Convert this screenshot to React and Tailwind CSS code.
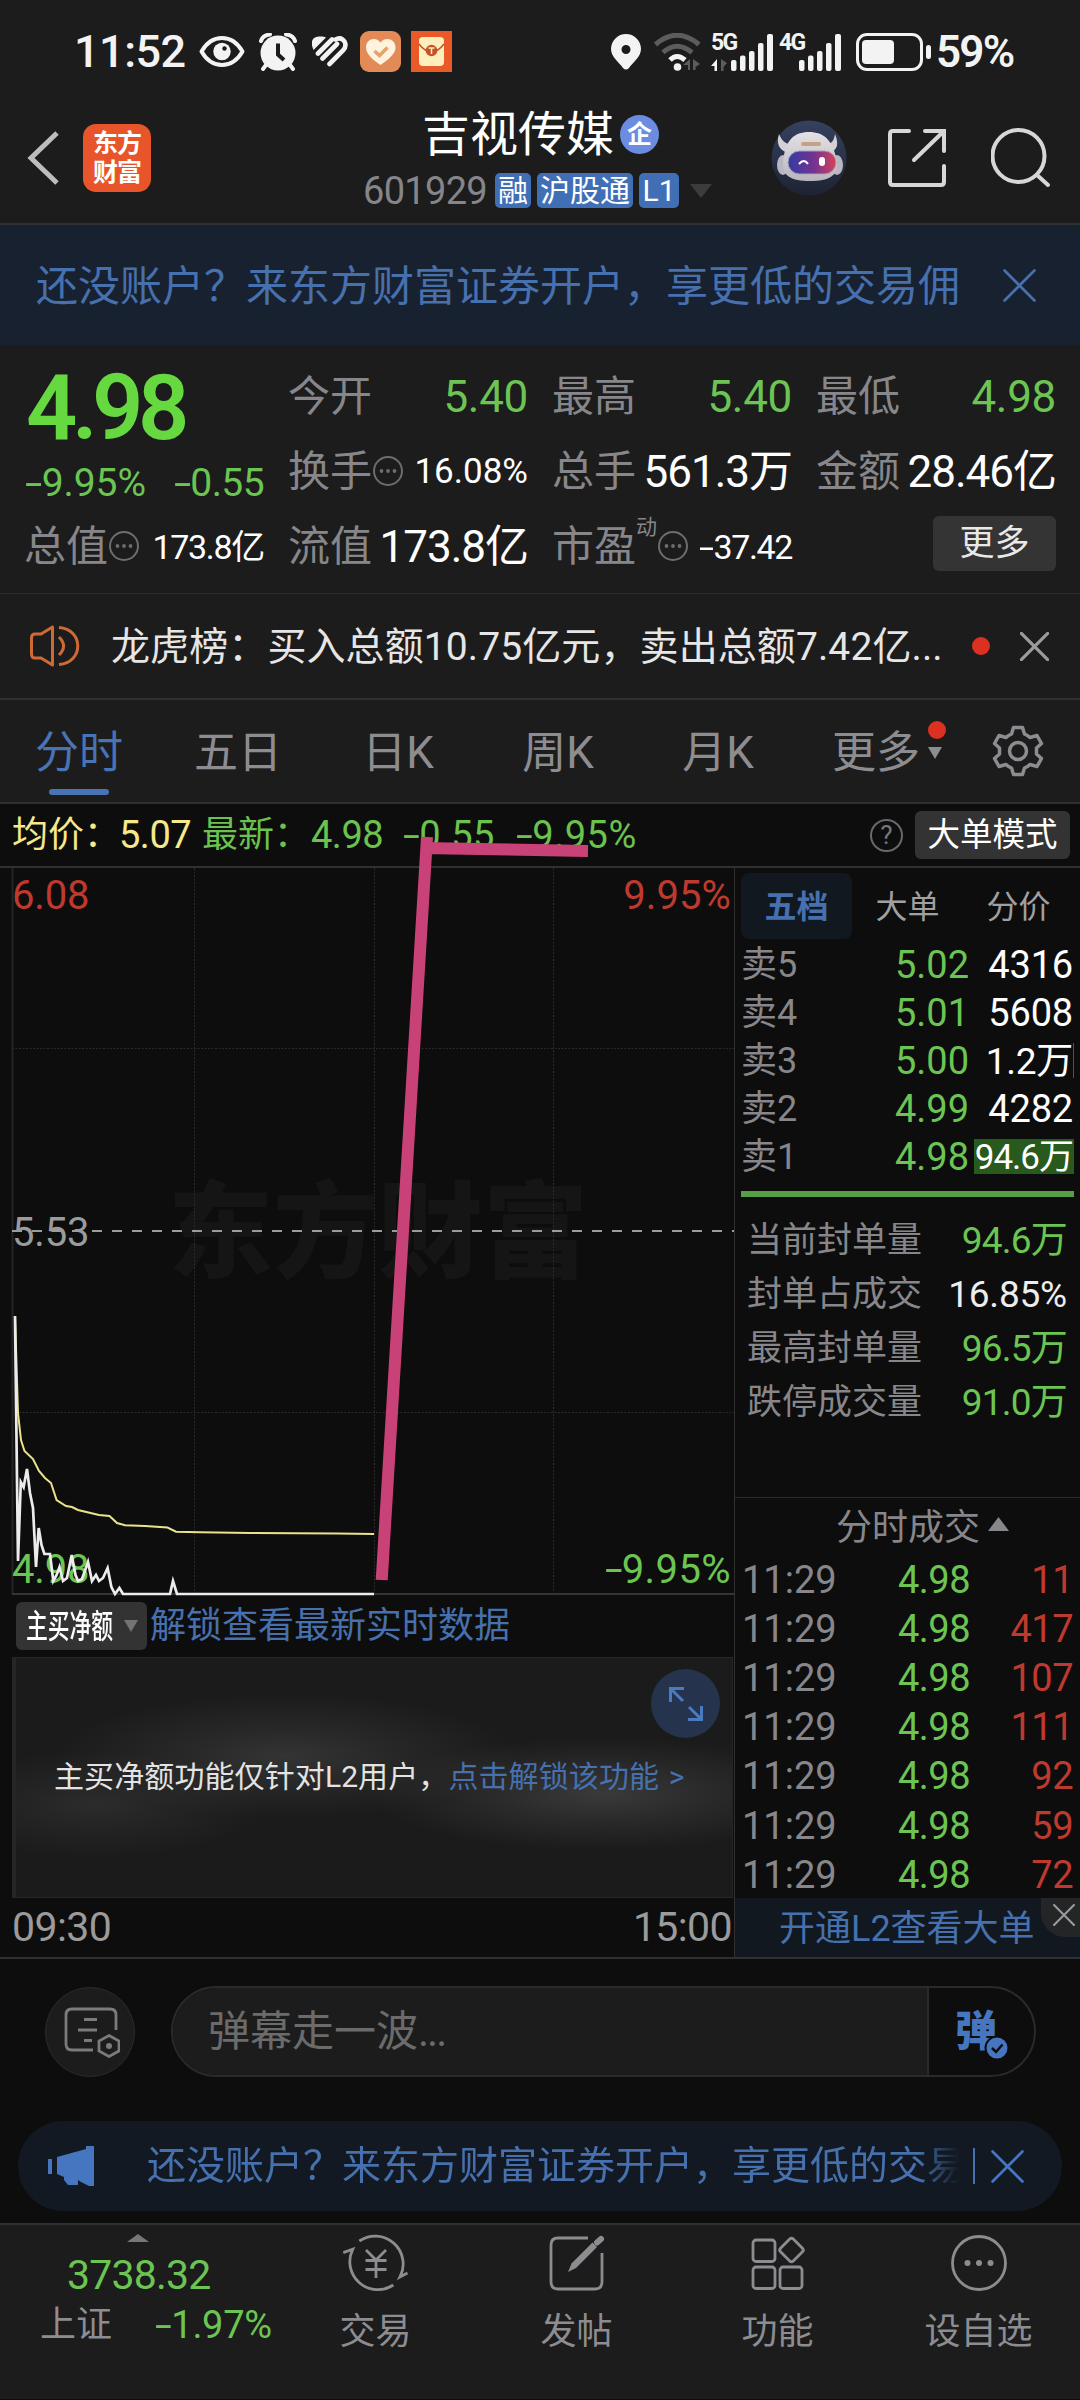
import clsx from "clsx";

const TABS = ["五日", "日K", "周K", "月K"];

const ASKS = [
  { label: "卖5", price: "5.02", volume: "4316" },
  { label: "卖4", price: "5.01", volume: "5608" },
  { label: "卖3", price: "5.00", volume: "1.2万", tick: true },
  { label: "卖2", price: "4.99", volume: "4282" },
  { label: "卖1", price: "4.98", volume: "94.6万", filled: true },
];

const LIMIT_STATS = [
  { label: "当前封单量", value: "94.6万", down: true },
  { label: "封单占成交", value: "16.85%" },
  { label: "最高封单量", value: "96.5万", down: true },
  { label: "跌停成交量", value: "91.0万", down: true },
];

const TRADES = [
  { time: "11:29", price: "4.98", volume: "11" },
  { time: "11:29", price: "4.98", volume: "417" },
  { time: "11:29", price: "4.98", volume: "107" },
  { time: "11:29", price: "4.98", volume: "111" },
  { time: "11:29", price: "4.98", volume: "92" },
  { time: "11:29", price: "4.98", volume: "59" },
  { time: "11:29", price: "4.98", volume: "72" },
];

const PRICE_LINE =
  "15,450 18,695 20.8,616 23.6,621 27,603 30,627 33,642 36,701 38.7,662 41.5,679 44.4,688 50,688 53.3,715 56.6,709 59.5,701 63,715 67,712 71.7,689 75.5,709 78,715 82,713 88,696 92,715 96,709 99,715 103,712 107.6,702 111.4,721 115,728 119.4,722 123,728 170,728 173,715 177,728 374,728";
const AVG_LINE =
  "15,450 18,547 21,574 24.5,585 33,593 39,605 45,612 51,617 56.6,634 66,640 72,641 78,644 99,649 109.5,650 117,657 125,659.3 145,660 167.5,661.5 176,665.7 200,666.3 250,667 337,667.5 374,668";

function CloseIcon({ className, width = 3 }) {
  return (
    <svg viewBox="0 0 32 32" className={className} fill="none" stroke="currentColor" strokeWidth={width}>
      <path d="M1.5 1.5 30.5 30.5M30.5 1.5 1.5 30.5" strokeLinecap="round" />
    </svg>
  );
}

function InfoDots() {
  return (
    <svg viewBox="0 0 32 32" className="h-8 w-8 shrink-0 text-[#6d6d70]">
      <circle cx="16" cy="16" r="14" fill="none" stroke="currentColor" strokeWidth="2" />
      <circle cx="9.5" cy="16" r="1.9" fill="currentColor" />
      <circle cx="16" cy="16" r="1.9" fill="currentColor" />
      <circle cx="22.5" cy="16" r="1.9" fill="currentColor" />
    </svg>
  );
}

// Negative numbers get a wider minus than the font's hyphen
function Num({ children }) {
  if (!children.startsWith("-")) return children;
  return (
    <>
      <span className="inline-block w-[0.43em] origin-left scale-x-[1.6]">-</span>
      {children.slice(1)}
    </>
  );
}

function SignalBars({ label, arrows }) {
  return (
    <div className="relative h-[38px] w-[62px]">
      <span className="absolute -top-[1px] left-0 text-[23px] leading-[22px] font-bold tracking-[-1.8px]">{label}</span>
      <svg viewBox="0 0 62 38" className="h-full w-full" fill="currentColor">
        {arrows && <path d="M0 33 6 26V38H3.5V33Z" />}
        {arrows && <path d="M16 30 10 26V38H12.500V34Z" fill="#5c5c5c" />}
        <rect x="20" y="27" width="5.500" height="11" rx="2" />
        <rect x="29" y="22.500" width="5.500" height="15.500" rx="2" />
        <rect x="38" y="18" width="5.500" height="20" rx="2" />
        <rect x="47" y="10" width="5.500" height="28" rx="2" />
        <rect x="56" y="1" width="6" height="37" rx="2" />
      </svg>
    </div>
  );
}

function StatusBar() {
  return (
    <div className="flex h-[103px] items-center pl-[74px] text-[#f3f3f3]">
      <span className="w-[125px] text-[45px] font-medium tracking-[-0.5px]">11:52</span>
      <svg viewBox="0 0 46 31" className="h-[31px] w-[46px]">
        <path d="M2.500 15.500C13-2.500 33-2.500 43.500 15.500 33 33.500 13 33.500 2.500 15.500Z" fill="none" stroke="currentColor" strokeWidth="4" strokeLinejoin="round" />
        <circle cx="23" cy="15.500" r="8.700" fill="currentColor" />
        <circle cx="25.500" cy="12.500" r="2.200" fill="#1c1c1c" />
      </svg>
      <svg viewBox="0 0 38 38" className="ml-[14px] h-[38px] w-[38px]" fill="none" stroke="currentColor">
        <circle cx="19" cy="20" r="17.500" fill="currentColor" stroke="none" />
        <path d="M2 8Q4 2 11 1.500M27 1.500Q34 2 36 8" strokeWidth="4" strokeLinecap="round" />
        <path d="M7 32 4 36M31 32 34 36" strokeWidth="4" strokeLinecap="round" />
        <path d="M19 10.500V21.500L25 27" stroke="#1c1c1c" strokeWidth="4" />
      </svg>
      <svg viewBox="0 0 36 31" className="ml-[15px] h-[31px] w-9" fill="currentColor">
        <path d="M14 1.500 1.500 14C-1.500 7-1 1 7 0.500 10 0.300 12 0.500 14 1.500Z" />
        <path d="M6 17.500 20 3.500M10.500 22.500 25 8M17.500 28 31 14.500Q35 10 32.500 5.500 29 0.500 23.500 3.500" fill="none" stroke="currentColor" strokeWidth="4.600" strokeLinecap="round" />
      </svg>
      <svg viewBox="0 0 41 41" className="ml-3 h-[41px] w-[41px]">
        <rect width="41" height="41" rx="9" fill="#e38b57" />
        <path d="M20.500 34C13 29 6 23 6 16.500 6 8 15.500 5 20.500 11.500 25.500 5 35.500 8 35.500 16.500 35.500 23 28 29 20.500 34Z" fill="#fff3dd" />
        <path d="M14.500 20 19.500 24.500 27.500 16.500" fill="none" stroke="#e3a46d" strokeWidth="3.500" />
      </svg>
      <svg viewBox="0 0 41 41" className="ml-[10px] h-[41px] w-[41px]">
        <rect width="41" height="41" fill="#ea5a28" />
        <rect x="8" y="6" width="25" height="29" rx="4" fill="#fdeebb" />
        <path d="M8 13Q20.500 29 33 13" fill="none" stroke="#b75530" strokeWidth="1.500" />
        <circle cx="20.500" cy="19.500" r="5.800" fill="#c4532a" />
        <path d="M17.500 17H23.500M20.500 17V23" stroke="#fdeebb" strokeWidth="1.500" />
      </svg>
      <svg viewBox="0 0 30 36" className="ml-[159px] h-9 w-[30px]">
        <path fillRule="evenodd" d="M15 0A15 15 0 0 0 0 15C0 23 8 28 12 34Q15 37 18 34C22 28 30 23 30 15A15 15 0 0 0 15 0ZM15 11A4.500 4.500 0 1 1 15 20 4.500 4.500 0 0 1 15 11Z" fill="currentColor" />
      </svg>
      <svg viewBox="0 0 48 38" className="ml-[13px] h-[38px] w-12" fill="none" strokeWidth="5">
        <path d="M1.500 11.500Q23-7 45 11.500" stroke="#5c5c5c" />
        <path d="M9 19.500Q23 7 38 19.500" stroke="#5c5c5c" />
        <path d="M16 27Q23 20 31 27" stroke="currentColor" />
        <circle cx="23.500" cy="34" r="3.800" fill="currentColor" />
        <path d="M29 32 36 26V37H34V32ZM46 31 39 26V37H41.500V34Z" fill="#5c5c5c" />
      </svg>
      <div className="ml-[9px]"><SignalBars label="5G" arrows /></div>
      <div className="ml-[6px]"><SignalBars label="4G" /></div>
      <svg viewBox="0 0 76 38" className="ml-[15px] h-[38px] w-[76px]">
        <rect x="1.500" y="1.500" width="64" height="35" rx="9.500" fill="none" stroke="currentColor" strokeWidth="3" />
        <rect x="6" y="7" width="32" height="24" rx="4" fill="currentColor" />
        <rect x="70" y="12" width="5" height="14" rx="2.500" fill="currentColor" />
      </svg>
      <span className="ml-[4px] text-[44px] font-semibold tracking-[-1.8px]">59%</span>
    </div>
  );
}

function Tag({ children, className }) {
  return (
    <span className={clsx("flex h-[35px] items-center justify-center rounded-[5px] bg-[#416fb6] text-[30px] leading-none text-white", className)}>
      {children}
    </span>
  );
}

function Header() {
  return (
    <header className="flex h-[122px] items-center border-b-2 border-[#303030] pb-[11px]">
      <svg viewBox="0 0 32 54" className="ml-[27px] h-[54px] w-8 text-[#bdbdbd]" fill="none" stroke="currentColor" strokeWidth="5">
        <path d="M30 2 4 27 30 52" />
      </svg>
      <div className="ml-6 flex h-[68px] w-[68px] flex-col items-center justify-center rounded-[13px] bg-[#e8552a] text-[25px] leading-[29px] font-bold tracking-[-1px] text-white">
        <span>东方</span>
        <span>财富</span>
      </div>
      <div className="ml-[212px] flex w-[350px] flex-col pt-[3px]">
        <div className="flex h-[58px] items-center pl-[59px]">
          <h1 className="text-[48px] leading-none text-white">吉视传媒</h1>
          <span className="ml-[6px] flex h-[39px] w-[39px] items-center justify-center rounded-full bg-[#6b8ce0] text-[25px] leading-none font-bold text-white">企</span>
        </div>
        <div className="mt-[5px] flex h-[44px] items-center gap-[6px]">
          <span className="mr-[2px] w-[124px] text-[38px] leading-none tracking-[-0.7px] text-[#85858a]">601929</span>
          <Tag className="w-9">融</Tag>
          <Tag className="w-24">沪股通</Tag>
          <Tag className="w-10">L1</Tag>
          <svg viewBox="0 0 22 14" className="ml-[5px] h-[14px] w-[22px]"><path d="M0 0H22L11 14Z" fill="#3c3c3c" /></svg>
        </div>
      </div>
      <svg viewBox="0 0 76 76" className="ml-[58px] h-[76px] w-[76px]">
        <defs>
          <linearGradient id="halo" x1="0" y1="0" x2="0" y2="1">
            <stop offset="0" stopColor="#35415f" />
            <stop offset="1" stopColor="#1d2333" />
          </linearGradient>
          <linearGradient id="shell" x1="0" y1="0" x2="0" y2="1">
            <stop offset="0" stopColor="#e4e1e4" />
            <stop offset="1" stopColor="#b9b5c0" />
          </linearGradient>
          <linearGradient id="visor" x1="0" y1="0" x2="1" y2="0">
            <stop offset="0" stopColor="#343ba5" />
            <stop offset="0.55" stopColor="#753390" />
            <stop offset="1" stopColor="#d6425b" />
          </linearGradient>
        </defs>
        <circle cx="38" cy="38" r="37.500" fill="url(#halo)" />
        <path d="M8 14C5 24 8 30 17 33L22 24C15 25 11 21 8 14ZM64 14C68 24 67 30 58 33L54 24C60 25 63 21 64 14Z" fill="#d3d0d6" />
        <ellipse cx="12" cy="45" rx="6" ry="10" fill="#b9b7c1" />
        <ellipse cx="66" cy="45" rx="6" ry="10" fill="#b9b7c1" />
        <path d="M12 42C14 20 23 12 38 12S62 20 66 42C67 56 58 61 39 61S11 56 12 42Z" fill="url(#shell)" />
        <rect x="17" y="31" width="48" height="23" rx="11.500" fill="url(#visor)" stroke="#a7a3b2" strokeWidth="1" />
        <rect x="30" y="22" width="20" height="4" rx="2" fill="#c6a184" />
        <path d="M28 44Q33 38 37 44" fill="none" stroke="#fff" strokeWidth="2" />
        <rect x="48" y="37" width="6" height="9" rx="3" fill="#fff" />
      </svg>
      <svg viewBox="0 0 60 60" className="ml-[40px] h-[60px] w-[60px] text-[#d7d7d7]" fill="none" stroke="currentColor" strokeWidth="4" strokeLinecap="round">
        <path d="M22 3H6Q3 3 3 6V54Q3 57 6 57H54Q57 57 57 54V38" />
        <path d="M38 3H57V23M56 4 27 32" />
      </svg>
      <svg viewBox="0 0 60 60" className="ml-[44px] h-[60px] w-[60px] text-[#d7d7d7]" fill="none" stroke="currentColor" strokeWidth="4" strokeLinecap="round">
        <circle cx="27.500" cy="28" r="26" />
        <path d="M46 47 57 57" />
      </svg>
    </header>
  );
}

function QuoteCell({ label, value, down, info, size = "text-[44px] tracking-[-1px]", sup }) {
  return (
    <div className="-ml-[2px] flex h-[75px] items-center justify-between">
      <div className="flex items-center text-[#87878b]">
        <span className="pt-[2px] text-[42px] leading-none">{label}</span>
        {sup && <span className="mb-9 text-[21px] leading-none">{sup}</span>}
        {info && <InfoDots />}
      </div>
      <span className={clsx("pt-[2px] leading-none", size, down ? "text-[#6cc553]" : "text-white")}>
        <Num>{value}</Num>
      </span>
    </div>
  );
}

function Quote() {
  return (
    <section className="grid h-[249px] grid-cols-[238px_238px_238px_238px] grid-rows-[75px_75px_75px] gap-x-[26px] border-b border-[#2a2a2a] pt-[13px] pl-[26px]">
      <div className="row-span-2 flex flex-col text-[#66d840]">
        <span className="mt-[8px] h-[86px] text-[90px] leading-[86px] font-semibold tracking-[-5.5px]">4.98</span>
        <div className="mt-[14px] -ml-[1px] flex items-center justify-between text-[39px] leading-[34px] tracking-[-0.1px] text-[#6cc553]">
          <span><Num>-9.95%</Num></span>
          <span className="tracking-[-0.6px]"><Num>-0.55</Num></span>
        </div>
      </div>
      <QuoteCell label="今开" value="5.40" size="text-[44px] tracking-[-0.3px]" down />
      <QuoteCell label="最高" value="5.40" size="text-[44px] tracking-[-0.3px]" down />
      <QuoteCell label="最低" value="4.98" size="text-[44px] tracking-[-0.3px]" down />
      <QuoteCell label="换手" value="16.08%" size="text-[35px]" info />
      <QuoteCell label="总手" value="561.3万" />
      <QuoteCell label="金额" value="28.46亿" />
      <QuoteCell label="总值" value="173.8亿" size="text-[34px] tracking-[-1.3px]" info />
      <QuoteCell label="流值" value="173.8亿" />
      <QuoteCell label="市盈" value="-37.42" sup="动" size="text-[34px] tracking-[-1.4px]" info />
      <button className="mt-[8px] flex h-[55px] w-[123px] items-center justify-center justify-self-end rounded-md bg-[#343434] text-[35px] leading-none text-[#e8e8e8]">
        更多
      </button>
    </section>
  );
}

function News() {
  return (
    <section className="flex h-[106px] items-center border-b-2 border-[#303030] pl-[30px]">
      <svg viewBox="0 0 50 42" className="h-[42px] w-[50px] text-[#cf6a36]" fill="none" stroke="currentColor" strokeWidth="3">
        <path d="M22.500 2V40L11 33H5Q1.500 33 1.500 29V13Q1.500 9 5 9H11Z" strokeLinejoin="round" />
        <path d="M29 12Q38 21 29 30M29 2.500C54 4 54 38 29 39.500" />
      </svg>
      <p className="ml-[31px] w-[841px] pt-[2px] text-[39px] leading-none tracking-[0.1px] whitespace-nowrap text-[#e6e6e6]">
        龙虎榜：买入总额10.75亿元，卖出总额7.42亿...
      </p>
      <span className="ml-[20px] h-[18px] w-[18px] rounded-full bg-[#dc3021]" />
      <CloseIcon className="ml-[30px] h-[29px] w-[29px] text-[#9b9b9b]" width={3.5} />
    </section>
  );
}

function PeriodTabs() {
  return (
    <nav className="flex h-[104px] items-center border-b-2 border-[#303030] text-[44px] leading-none text-[#8d8d91]">
      <div className="relative flex h-full w-[158px] items-center justify-center pt-[3px] text-[#4873b4]">
        分时
        <span className="absolute bottom-[7px] h-[6px] w-[60px] rounded-full bg-[#4873b4]" />
      </div>
      {TABS.map((tab) => (
        <div key={tab} className="flex w-[160px] items-center justify-center pt-[3px]">{tab}</div>
      ))}
      <div className="relative flex w-[160px] items-center pt-[3px] pl-[34px]">
        更多
        <svg viewBox="0 0 14 12" className="ml-[8px] h-3 w-[14px]"><path d="M0 0H14L7 12Z" fill="currentColor" /></svg>
        <span className="absolute -top-[7px] left-[130px] h-[18px] w-[18px] rounded-full bg-[#dc3021]" />
      </div>
      <svg viewBox="0 0 52 52" className="ml-[34px] h-[52px] w-[52px]" fill="none" stroke="currentColor" strokeWidth="3.500" strokeLinejoin="round">
        <path d="M21.500 2.500H30.500L32.500 9Q36 10.500 38 12.500L45 10.500 49.500 18.500 44.500 23V29L49.500 33.500 45 41.500 38 39.500Q36 41.500 32.500 43L30.500 49.500H21.500L19.500 43Q16 41.500 14 39.500L7 41.500 2.500 33.500 7.500 29V23L2.500 18.500 7 10.500 14 12.500Q16 10.500 19.500 9Z" />
        <circle cx="26" cy="26" r="8.500" />
      </svg>
    </nav>
  );
}

function AverageRow() {
  return (
    <div className="flex h-[64px] items-center border-b-2 border-[#303030] pl-[12px] text-[38px] leading-none whitespace-nowrap text-[#6cc24f]">
      <span className="w-[107px] text-[36px] text-[#f5e989]">均价：</span>
      <span className="w-[83px] tracking-[-0.5px] text-[#f5e989]">5.07</span>
      <span className="w-[109px] text-[36px]">最新：</span>
      <span className="w-[92px] tracking-[-0.5px]">4.98</span>
      <span className="w-[113px] tracking-[0.3px]"><Num>-0.55</Num></span>
      <span className="tracking-[0.5px]"><Num>-9.95%</Num></span>
      <div className="ml-auto flex h-[33px] w-[33px] items-center justify-center rounded-full border-2 border-[#69696c] text-[26px] text-[#77777a]">?</div>
      <button className="mr-[10px] ml-[12px] h-[48px] w-[155px] rounded-md bg-[#333333] text-[32.5px] text-white">大单模式</button>
    </div>
  );
}

// Intraday chart; the svg is drawn in the same pixels as its box
function Chart() {
  return (
    <div className="relative h-[726px] shrink-0 text-[40px] leading-none">
      <span className="absolute top-[306px] left-[168px] text-[105px] leading-[120px] font-black text-[#151515]">东方财富</span>
      <svg viewBox="0 2 735 728" className="absolute top-0 left-0 h-[728px] w-[735px] overflow-visible" fill="none">
        <g stroke="#2b2b2b" strokeWidth="1" strokeDasharray="2 1.500">
          <path d="M194.500 2V728M374.500 2V728M553.500 2V728M12 182.500H734M12 546.500H734" />
        </g>
        <path d="M12.500 2V728" stroke="#252525" strokeWidth="2" />
        <path d="M12 728H734" stroke="#343434" strokeWidth="2" />
        <path d="M12 365H734" stroke="#9c9c9c" strokeWidth="2" strokeDasharray="10 10" />
      </svg>
      <div className="absolute inset-0 flex flex-col justify-between pt-2 pr-[3px] pb-1 pl-3 tracking-[-0.6px]">
        <div className="flex justify-between text-[#bf3a2e]">
          <span className="tracking-[-0.2px]">6.08</span>
          <span className="tracking-[0.1px]">9.95%</span>
        </div>
        <span className="tracking-[-0.2px] text-[#9b9b9b]">5.53</span>
        <div className="flex justify-between text-[#6cc553]">
          <span className="tracking-[-0.2px]">4.98</span>
          <span className="tracking-[0.4px]"><Num>-9.95%</Num></span>
        </div>
      </div>
      <svg viewBox="0 2 735 728" className="absolute top-0 left-0 z-10 h-[728px] w-[735px] overflow-visible" fill="none">
        <polyline points={AVG_LINE} stroke="#ede28c" strokeWidth="2" />
        <polyline points={PRICE_LINE} stroke="#ececec" strokeWidth="2.700" />
        <path d="M381.700 714 427-29M421-18 588-15" stroke="#c94277" strokeWidth="12" />
      </svg>
    </div>
  );
}

function LeftPane() {
  return (
    <div className="flex w-[735px] shrink-0 flex-col border-r border-[#303030]">
      <Chart />
      <div className="mt-[8px] flex h-[48px] items-center pl-4">
        <button className="flex h-[48px] w-[131px] items-center rounded-md bg-[#333333]">
          <span className="ml-[10px] block w-[88px] origin-left scale-x-[0.66] text-left text-[33px] leading-none font-medium whitespace-nowrap text-white">主买净额</span>
          <svg viewBox="0 0 14 12" className="ml-[10px] h-3 w-[14px]"><path d="M0 0H14L7 12Z" fill="#747474" /></svg>
        </button>
        <span className="ml-[3px] text-[36px] leading-none text-[#4670ae]">解锁查看最新实时数据</span>
      </div>
      <div className="relative mt-[7px] ml-3 h-[241px] w-[721px] border border-l-4 border-[#262626] bg-[#1b1b1b] bg-[radial-gradient(ellipse_230px_62px_at_270px_98px,#343434_0%,rgba(52,52,52,0.5)_45%,transparent_100%),radial-gradient(ellipse_230px_56px_at_585px_136px,#3a3a3a_0%,rgba(58,58,58,0.5)_45%,transparent_100%),radial-gradient(ellipse_170px_54px_at_80px_146px,#2c2c2c_0%,rgba(44,44,44,0.5)_45%,transparent_100%)]">
        <p className="mt-[104px] ml-[38px] text-[30px] leading-none tracking-[0.1px] whitespace-nowrap text-[#e3e3e3]">
          主买净额功能仅针对L2用户，<span className="text-[#4670ae]">点击解锁该功能 <span className="ml-[2px]">&gt;</span></span>
        </p>
        <button className="absolute top-[11px] right-[12px] flex h-[69px] w-[69px] items-center justify-center rounded-full bg-[#25344c]">
          <svg viewBox="0 0 34 34" className="h-[34px] w-[34px] text-[#4a7ac0]" fill="none" stroke="currentColor" strokeWidth="3">
            <path d="M15 1.500H1.500V15M1.500 1.500 14 14M19 32.500H32.500V19M32.500 32.500 20 20" />
          </svg>
        </button>
      </div>
      <div className="flex flex-1 items-center justify-between pr-[2px] pl-[12px] text-[41px] leading-none tracking-[-0.6px] text-[#9b9b9b]">
        <span>09:30</span>
        <span>15:00</span>
      </div>
    </div>
  );
}

function RightPane() {
  return (
    <div className="flex flex-1 flex-col">
      <div className="mt-[5px] ml-[6px] flex h-[66px] w-[333px] shrink-0 text-[32px] leading-none text-[#a0a0a0]">
        <span className="flex w-[111px] items-center justify-center rounded-lg bg-[#111820] pt-[2px] font-bold text-[#4670ae]">五档</span>
        <span className="flex w-[111px] items-center justify-center pt-[2px]">大单</span>
        <span className="flex w-[111px] items-center justify-center pt-[2px]">分价</span>
      </div>
      <div className="mt-[1px] mr-[6px] ml-[6px] flex shrink-0 flex-col">
        {ASKS.map((row) => (
          <div key={row.label} className="flex h-12 items-center text-[38px] leading-none">
            <span className="w-[100px] pt-[2px] text-[36px] text-[#87878b]">{row.label}</span>
            <span className="w-[128px] pt-[2px] text-right text-[#6cc553]">{row.price}</span>
            <span
              className={clsx(
                "ml-auto flex h-[35px] items-center justify-end border-r pt-[2px] text-white",
                row.filled && "w-[100px] border-[#28591d] bg-[#28591d] text-[35px] tracking-[-1px]",
                row.tick && "w-[104px] border-[#2f6b22] text-[37px] tracking-[-0.3px]",
                !row.filled && !row.tick && "w-[104px] border-transparent tracking-[-0.2px]"
              )}
            >
              {row.volume}
            </span>
          </div>
        ))}
      </div>
      <div className="mt-[11px] ml-[6px] h-[6px] w-[333px] shrink-0 bg-[#55a043]" />
      <div className="mt-[15px] mr-[13px] ml-[12px] flex h-[285px] shrink-0 flex-col">
        {LIMIT_STATS.map((stat) => (
          <div key={stat.label} className="flex h-[54px] shrink-0 items-center justify-between pt-[2px] leading-none">
            <span className="text-[35px] text-[#87878b]">{stat.label}</span>
            <span className={clsx("text-[37px]", stat.down ? "tracking-[-0.8px] text-[#6cc553]" : "tracking-[-0.2px] text-[#ededed]")}>{stat.value}</span>
          </div>
        ))}
      </div>
      <div className="flex h-[57px] shrink-0 items-center border-t border-[#2a2a2a] pt-1 pl-[101px] text-[36px] leading-none text-[#87878b]">
        分时成交
        <svg viewBox="0 0 21 14" className="mb-[8px] ml-[8px] h-[14px] w-[21px]"><path d="M0 14H21L10.500 0Z" fill="currentColor" /></svg>
      </div>
      <div className="mr-[7px] ml-[7px] flex shrink-0 flex-col">
        {TRADES.map(({ time, price, volume }, i) => (
          <div key={i} className="flex h-[49.2px] items-center pt-[2px] text-[38px] leading-none">
            <span className="w-[100px] text-[#87878b]">{time}</span>
            <span className="w-[128px] text-right tracking-[-0.5px] text-[#6cc553]">{price}</span>
            <span className="ml-auto tracking-[-0.5px] text-[#bf3a2e]">{volume}</span>
          </div>
        ))}
      </div>
      <div className="relative flex flex-1 items-center bg-[#111820] pt-[3px] pl-[44px] text-[36px] leading-none text-[#4670ae]">
        开通L2查看大单
        <button className="absolute top-0 right-0 flex h-[39px] w-[39px] items-center justify-center rounded-bl-[24px] bg-[#232527] pb-[6px] pl-[6px]">
          <CloseIcon className="h-[22px] w-[22px] text-[#9b9b9b]" />
        </button>
      </div>
    </div>
  );
}

function DanmuBar() {
  return (
    <div className="mt-[27px] flex h-[91px] items-center pl-[45px]">
      <button className="flex h-[90px] w-[90px] items-center justify-center rounded-full border border-[#2b2b2b] bg-[#1c1c1c]">
        <svg viewBox="0 0 56 52" className="ml-[3px] h-[52px] w-14 text-[#7b7b7b]" fill="none" stroke="currentColor" strokeWidth="2.800">
          <path d="M52 24V9Q52 3 46 3H8Q2 3 2 9V38Q2 44 8 44H29M20 13.500H33M14 24H33M20 34.500H28" />
          <path d="M45 29.500 55 35V45L45 50.500 35 45V35Z" />
          <circle cx="45" cy="40" r="3" fill="currentColor" stroke="none" />
        </svg>
      </button>
      <div className="ml-9 flex h-[91px] w-[865px] overflow-hidden rounded-full border-2 border-[#2a2a2a]">
        <div className="flex flex-1 items-center border-r-2 border-[#2a2a2a] bg-[#1c1c1c] pt-[1px] pl-[35px] text-[42px] leading-none text-[#6b6b6b]">
          弹幕走一波<span className="tracking-[-2px]">...</span>
        </div>
        <button className="relative flex w-[105px] items-center pl-[26px] text-[42px] leading-none font-black text-[#4676bf]">
          弹
          <svg viewBox="0 0 26 26" className="absolute top-[47px] left-[55px] h-[26px] w-[26px]">
            <circle cx="13" cy="13" r="11.500" fill="#4676bf" stroke="#0d0d0d" strokeWidth="2" />
            <path d="M8 13 12 17 18.500 9.500" fill="none" stroke="#0d0d0d" strokeWidth="2.500" />
          </svg>
        </button>
      </div>
    </div>
  );
}

function AccountPill() {
  return (
    <div className="mx-[18px] mt-[44px] flex h-[90px] items-center rounded-full bg-[#121922] pl-[30px] text-[#4676bf]">
      <svg viewBox="0 0 46 40" className="h-10 w-[46px]" fill="currentColor">
        <path d="M0 13H4V28H0ZM9 11 38 3V0H46V40H41L33 36 30 34V39H20L16 34V31L9 28Z" />
      </svg>
      <p className="ml-[53px] w-[821px] mask-r-from-[94%] mask-r-to-[99%] text-[39px] leading-[50px] whitespace-nowrap text-[#4670ae]">
        还没账户？来东方财富证券开户，享更低的交易
      </p>
      <span className="ml-[5px] h-9 w-[2px] bg-[#4670ae]" />
      <CloseIcon className="ml-[16px] h-[33px] w-[33px]" width={2.6} />
    </div>
  );
}

function TradeIcon() {
  return (
    <>
      <path d="M17.300 12A28 28 0 0 1 58 48L65.500 44M51.300 56A28 28 0 0 1 10.700 20.300L1.300 23.600" />
      <path d="M24 21 34 31 44 21M23.500 31.500H44.500M23.500 40.500H44.500M34 31V49" />
    </>
  );
}

function PostIcon() {
  return (
    <>
      <path d="M45 9H15Q8 9 8 16V53Q8 60 15 60H52Q59 60 59 53V24" />
      <path d="M25 43 28.500 34.500 49.500 13.500 54 18 33 39Z" fill="currentColor" stroke="none" />
      <path d="M54 13.500 58 10" strokeWidth="6" strokeLinecap="round" />
    </>
  );
}

function FeatureIcon() {
  return (
    <>
      <rect x="9" y="11" width="22" height="21.500" rx="3" />
      <rect x="9" y="38" width="22" height="21.500" rx="3" />
      <rect x="36" y="38" width="22" height="21.500" rx="3" />
      <rect x="38.500" y="12" width="18" height="18" rx="2.500" transform="rotate(45 47.500 21)" />
    </>
  );
}

function MoreIcon() {
  return (
    <>
      <circle cx="34" cy="34" r="26.500" />
      <g fill="currentColor" stroke="none">
        <circle cx="22.500" cy="34" r="3" />
        <circle cx="34" cy="34" r="3" />
        <circle cx="45.500" cy="34" r="3" />
      </g>
    </>
  );
}

const ACTIONS = [
  { label: "交易", Icon: TradeIcon },
  { label: "发帖", Icon: PostIcon },
  { label: "功能", Icon: FeatureIcon },
  { label: "设自选", Icon: MoreIcon },
];

function BottomNav() {
  return (
    <footer className="mt-[12px] flex h-[176px] border-t-2 border-[#303030] bg-[#1c1c1c] text-[#8d8d91]">
      <div className="flex w-[275px] flex-col">
        <svg viewBox="0 0 22 8" className="mt-[9px] ml-[127px] h-2 w-[22px]"><path d="M0 8H22L11 0Z" fill="#77777a" /></svg>
        <span className="mt-[12px] ml-[67px] text-[41px] leading-[42px] tracking-[-0.8px] text-[#6cc553]">3738.32</span>
        <div className="mt-[6px] flex h-[46px] items-center pl-[40px] text-[36px] leading-none">
          上证
          <span className="ml-[43px] text-[38px] tracking-[-0.3px] text-[#6cc553]"><Num>-1.97%</Num></span>
        </div>
      </div>
      {ACTIONS.map(({ label, Icon }) => (
        <button key={label} className="flex w-[201px] flex-col items-center">
          <svg viewBox="0 0 68 68" className="mt-1 h-[68px] w-[68px]" fill="none" stroke="currentColor" strokeWidth="2.800">
            <Icon />
          </svg>
          <span className="mt-[15px] text-[36px] leading-[40px]">{label}</span>
        </button>
      ))}
    </footer>
  );
}

export default function App() {
  return (
    <div lang="zh-CN" className="flex h-[2400px] w-[1080px] flex-col overflow-hidden bg-[#0d0d0d] font-['Roboto','Noto_Sans_CJK_SC',sans-serif]">
      <div className="bg-[#1c1c1c]">
        <StatusBar />
        <Header />
        <div className="flex h-[120px] items-center bg-[#18212f] pl-[36px] text-[#4670ae]">
          <p className="w-[967px] pt-[3px] text-[42px] leading-none whitespace-nowrap">还没账户？来东方财富证券开户，享更低的交易佣</p>
          <CloseIcon className="h-[33px] w-[33px]" width={2.6} />
        </div>
        <Quote />
        <News />
        <PeriodTabs />
      </div>
      <AverageRow />
      <main className="flex h-[1091px] shrink-0 border-b-2 border-[#303030]">
        <LeftPane />
        <RightPane />
      </main>
      <DanmuBar />
      <AccountPill />
      <BottomNav />
    </div>
  );
}
